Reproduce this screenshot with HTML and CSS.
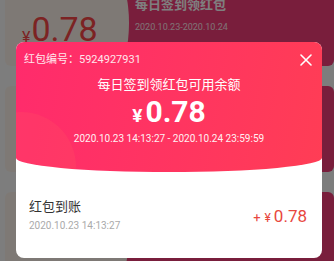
FILE: index.html
```html
<!DOCTYPE html>
<html lang="zh">
<head>
<meta charset="utf-8">
<link rel="stylesheet" href="styles.css">
</head>
<body>
<div class="page">
  <div class="card card-first">
    <div class="card-left"><span class="cur">¥</span><span class="big">0.78</span></div>
    <div class="card-right">
      <div class="card-title">每日签到领红包</div>
      <div class="card-date">2020.10.23-2020.10.24</div>
    </div>
  </div>
  <div class="card">
    <div class="card-left"></div>
    <div class="card-right"></div>
  </div>
  <div class="card">
    <div class="card-left"></div>
    <div class="card-right"></div>
  </div>
</div>
<div class="overlay"></div>
<div class="modal">
  <div class="head">
    <div class="glow"></div>
    <div class="head-row">
      <span class="serial">红包编号：5924927931</span>
      <svg class="close" width="12" height="12" viewBox="0 0 12 12"><path d="M1 1L11 11M11 1L1 11" stroke="#fff" stroke-width="1.6" stroke-linecap="round"/></svg>
    </div>
    <div class="title">每日签到领红包可用余额</div>
    <div class="amount"><span class="yen">¥</span><span class="num">0.78</span></div>
    <div class="range">2020.10.23 14:13:27 - 2020.10.24 23:59:59</div>
  </div>
  <div class="body">
    <div class="rec">
      <div class="rec-name">红包到账</div>
      <div class="rec-time">2020.10.23 14:13:27</div>
    </div>
    <div class="rec-amt"><span class="plus">+</span><span class="ry">¥</span><span class="rv">0.78</span></div>
  </div>
</div>
</body>
</html>
```
FILE: styles.css
```css
* { box-sizing: border-box; }
html, body { margin: 0; padding: 0; }
body {
  width: 334px; height: 261px; overflow: hidden; position: relative;
  background: #fafafa;
  font-family: Roboto, "Noto Sans CJK SC", sans-serif;
}
.page {
  display: flex; flex-direction: column; gap: 20px;
  padding-left: 5px; margin-top: -20px;
}
.card {
  height: 86px; display: flex; flex-shrink: 0;
}
.card-left {
  width: 112px; background: #fdf3ea; border-radius: 6px 0 0 6px;
  display: flex; align-items: flex-end; padding: 0 0 20px 17px;
  position: relative; z-index: 1;
}
.card-left::after {
  content: ""; position: absolute; right: -12px; top: 0; bottom: 0; width: 24px;
  background: #fdf3ea; border-radius: 0 50% 50% 0 / 0 50% 50% 0;
}
.card-right {
  flex: 1; background: #f23c78; border-radius: 0 6px 6px 0;
  padding: 16px 0 0 18px;
}
.cur { font-size: 16px; color: #f84646; margin-right: 1px; line-height: 1; position: relative; z-index: 2; }
.big { font-size: 34px; color: #f84646; line-height: 1; position: relative; z-index: 2; }
.card-title { font-family: "Noto Sans CJK SC", sans-serif; font-size: 13px; font-weight: 700; color: #fff; line-height: 16px; }
.card-date { font-size: 9px; line-height: 12px; color: #ffe3ea; margin-top: 9px; }
.overlay { position: absolute; inset: 0; background: rgba(0,0,0,0.5); z-index: 10; }
.modal {
  position: absolute; z-index: 11; left: 16px; top: 42px; width: 306px; height: 216px;
  background: #fff; border-radius: 8px; overflow: hidden;
}
.head {
  position: relative; height: 130px; overflow: hidden;
  background: linear-gradient(100deg, #ff2b6c 0%, #ff3560 55%, #ff3d55 100%);
  border-radius: 0 0 50% 50% / 0 0 14px 14px;
  color: #fff; text-align: center;
}
.glow {
  position: absolute; left: -50px; top: 70px; width: 110px; height: 110px; border-radius: 50%;
  background: rgba(255, 150, 90, 0.09);
}
.head-row {
  position: relative; display: flex; justify-content: space-between; align-items: center;
  padding: 11px 10px 0 8px; height: 25px;
}
.serial { font-size: 11px; line-height: 14px; color: #ffe6ec; }
.close { display: block; }
.title { position: relative; font-family: "Noto Sans CJK SC", sans-serif; font-size: 13px; line-height: 18px; margin-top: 8px; }
.amount { position: relative; margin-top: 2px; line-height: 34px; height: 34px; }
.yen { font-size: 19px; font-weight: 700; margin-right: 3px; }
.num { font-size: 30px; font-weight: 700; }
.range { position: relative; font-size: 10px; line-height: 14px; margin-top: 3px; color: #fff0f3; }
.body {
  display: flex; justify-content: space-between; align-items: center;
  padding: 25px 15px 0 13px;
}
.rec-name { font-family: "Noto Sans CJK SC", sans-serif; font-size: 13px; line-height: 18px; color: #333; }
.rec-time { font-size: 10px; line-height: 14px; color: #aaa; margin-top: 4px; }
.rec-amt { color: #e8473e; display: flex; align-items: baseline; margin-top: 2px; }
.plus { font-size: 13px; margin-right: 4px; }
.ry { font-size: 12px; margin-right: 3px; }
.rv { font-size: 17px; }
```
